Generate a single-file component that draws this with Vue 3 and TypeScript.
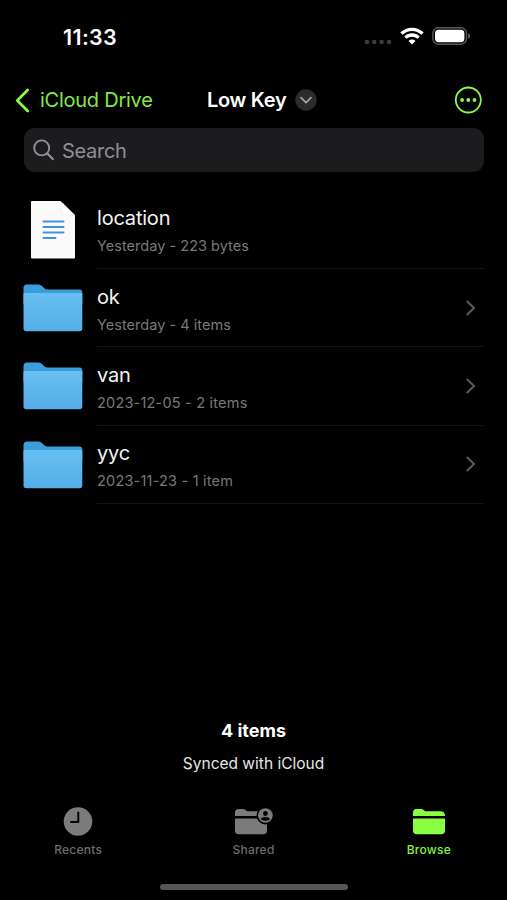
<script setup lang="ts">
interface Entry {
  name: string
  detail: string
  kind: 'file' | 'folder'
}

const entries: Entry[] = [
  { name: 'location', detail: 'Yesterday - 223 bytes', kind: 'file' },
  { name: 'ok', detail: 'Yesterday - 4 items', kind: 'folder' },
  { name: 'van', detail: '2023-12-05 - 2 items', kind: 'folder' },
  { name: 'yyc', detail: '2023-11-23 - 1 item', kind: 'folder' },
]

const isDated = (entry: Entry): boolean => /^\d/.test(entry.detail)
</script>

<template>
  <div class="screen">
    <header class="status">
      <span class="time">11:33</span>
      <div class="indicators">
        <svg class="dots" width="28" height="6" viewBox="0 0 28 6">
          <circle cx="3" cy="3" r="2.3" /><circle cx="10.3" cy="3" r="2.3" />
          <circle cx="17.6" cy="3" r="2.3" /><circle cx="24.9" cy="3" r="2.3" />
        </svg>
        <svg class="wifi" width="24" height="18" viewBox="0 0 24 18">
          <g fill="none" stroke="#fff" stroke-width="3.3">
            <path d="M1.5 6.6a15 15 0 0 1 21 0" />
            <path d="M5.4 10.7a9.4 9.4 0 0 1 13.2 0" />
          </g>
          <path d="M12 17.6 8.5 14a5 5 0 0 1 7 0z" fill="#fff" />
        </svg>
        <svg class="battery" width="39" height="18" viewBox="0 0 39 18">
          <rect x="0.9" y="0.8" width="33.6" height="16.4" rx="5.4" fill="none" stroke="#59595b" stroke-width="1.4" />
          <rect x="3" y="2.8" width="29.4" height="12.4" rx="3.6" fill="#fff" />
          <path d="M36.2 6.2c2.4 1 2.4 4.6 0 5.6z" fill="#69696b" />
        </svg>
      </div>
    </header>

    <nav class="navbar">
      <div class="back">
        <svg width="15" height="25" viewBox="0 0 15 25">
          <path d="M12.7 2 2.3 12.5 12.7 23" fill="none" stroke="#8bfa48" stroke-width="2.7" stroke-linecap="round" stroke-linejoin="round" />
        </svg>
        <span class="back-label">iCloud Drive</span>
      </div>
      <div class="title">
        <span class="title-label">Low Key</span>
        <svg width="22" height="22" viewBox="0 0 22 22">
          <circle cx="11" cy="11" r="10.7" fill="#2b2b2d" />
          <path d="m6 8.7 5 5 5-5" fill="none" stroke="#a2a2a6" stroke-width="1.8" stroke-linecap="round" stroke-linejoin="round" />
        </svg>
      </div>
      <svg class="more" width="28" height="28" viewBox="0 0 28 28" fill="#8bfa48">
        <circle cx="14.3" cy="14" r="12.5" fill="none" stroke="#8bfa48" stroke-width="1.8" />
        <circle cx="8.1" cy="14" r="1.9" /><circle cx="14.3" cy="14" r="1.9" /><circle cx="20.5" cy="14" r="1.9" />
      </svg>
    </nav>

    <div class="search">
      <svg width="22" height="22" viewBox="0 0 22 22" fill="none" stroke="#8f8f95" stroke-width="1.9" stroke-linecap="round">
        <circle cx="8.7" cy="8.9" r="7.5" /><path d="m14.3 14.500 5.500 5.500" stroke-width="2.300" />
      </svg>
      <span>Search</span>
    </div>

    <ul class="list">
      <li v-for="entry in entries" :key="entry.name" class="row">
        <div class="thumb">
          <svg v-if="entry.kind === 'file'" width="44" height="58" viewBox="0 0 44 58">
            <path d="M1 0h28.5L44 14.3V56.5q0 1-1 1H1q-1 0-1-1V1q0-1 1-1z" fill="#fafafa" />
            <path d="M30.500 1 44 14.300H33q-2.500 0-2.500-2.500z" fill="#ececee" />
            <path d="M31.200 1.700 42.800 13.500H33.200q-2 0-2-2z" fill="#fff" />
            <path d="M12.500 20.500h20M12.500 26h20M12.500 31.600h20M12.500 37h12" stroke="#3f8fe4" stroke-width="2" stroke-linecap="round" />
          </svg>
          <svg v-else width="60" height="48" viewBox="0 0 60 48">
            <defs>
              <linearGradient id="folder-front" x1="0" y1="0" x2="0" y2="1">
                <stop offset="0" stop-color="#67bff3" /><stop offset="1" stop-color="#55ade6" />
              </linearGradient>
            </defs>
            <path d="M.5 4Q.5.5 4 .5H15.500Q17.500.500 19 2L21.300 4.300Q22.500 5.500 24.500 5.500H56.500Q59.300 5.500 59.300 8.500V20H.5z" fill="#3c9ddd" />
            <path d="M.5 10Q.5 9 1.500 9H58.300Q59.300 9 59.300 10V44.500Q59.300 47.300 56.500 47.300H3.300Q.5 47.300.5 44.500z" fill="url(#folder-front)" />
          </svg>
        </div>
        <div class="body">
          <div class="texts">
            <span class="name">{{ entry.name }}</span>
            <span class="detail" :class="{ dated: isDated(entry) }">{{ entry.detail }}</span>
          </div>
          <svg v-if="entry.kind === 'folder'" class="chevron" width="10" height="16" viewBox="0 0 10 16">
            <path d="m1.300 1.500 6.700 6.500-6.700 6.500" fill="none" stroke="#58585b" stroke-width="2.100" stroke-linecap="round" stroke-linejoin="round" />
          </svg>
        </div>
      </li>
    </ul>

    <section class="summary">
      <strong>4 items</strong>
      <span>Synced with iCloud</span>
    </section>

    <footer class="tabs">
      <div class="tab">
        <svg width="30" height="30" viewBox="0 0 30 30">
          <circle cx="15" cy="14.500" r="14.300" fill="#7b7b7b" />
          <path d="M15.300 5.500v9.500H8" fill="none" stroke="#050505" stroke-width="2" stroke-linecap="round" stroke-linejoin="round" />
        </svg>
        <span>Recents</span>
      </div>
      <div class="tab">
        <svg width="39" height="30" viewBox="0 0 39 30">
          <path d="M1 9V5.500Q1 2 4.500 2H9Q10.500 2 11.700 3L12.500 3.700Q13.300 4.300 14.500 4.300H28.500Q33 4.300 33 9z" fill="#7b7b7b" />
          <path d="M1 11.500H33V23.500Q33 27.300 29.200 27.300H4.800Q1 27.300 1 23.500z" fill="#7b7b7b" />
          <circle cx="31.400" cy="8.500" r="8.900" fill="#000" />
          <circle cx="31.400" cy="8.500" r="7.300" fill="#7b7b7b" />
          <circle cx="31.400" cy="6.500" r="2.400" fill="#050505" />
          <path d="M26.800 12.400q0-2.500 4.600-2.500t4.600 2.500q-4.600 2.700-9.200 0z" fill="#050505" />
        </svg>
        <span>Shared</span>
      </div>
      <div class="tab active">
        <svg width="34" height="30" viewBox="0 0 34 30" fill="#8aff42">
          <path d="M1 9V5.500Q1 2 4.500 2H9Q10.500 2 11.700 3L12.500 3.700Q13.300 4.300 14.500 4.300H28.500Q33 4.300 33 9z" />
          <path d="M1 11.500H33V23.500Q33 27.300 29.200 27.300H4.800Q1 27.300 1 23.500z" />
        </svg>
        <span>Browse</span>
      </div>
    </footer>
    <div class="home"></div>
  </div>
</template>

<style>
body {
  background: #000;
}
</style>

<style scoped>
.screen {
  box-sizing: border-box;
  width: 507px;
  height: 900px;
  display: flex;
  flex-direction: column;
  overflow: hidden;
  background: #000;
  color: #fff;
  font-family: Inter, 'Liberation Sans', sans-serif;
}
svg {
  display: block;
  flex: none;
}
span,
strong {
  white-space: nowrap;
}
.status {
  height: 74px;
  flex: none;
  box-sizing: border-box;
  padding: 0 36px 0 63px;
  display: flex;
  align-items: center;
  justify-content: space-between;
}
.time {
  font-size: 21.5px;
  font-weight: 600;
  letter-spacing: 0.35px;
}
.indicators {
  display: flex;
  align-items: center;
  margin-top: -2px;
}
.dots {
  fill: #3b3b3c;
  margin: 12px 8px 0 0;
}
.wifi {
  margin-right: 8px;
}
.navbar {
  height: 52px;
  flex: none;
  box-sizing: border-box;
  padding: 0 25px 0 15px;
  display: grid;
  grid-template-columns: 192px auto 1fr;
  align-items: center;
}
.back {
  display: flex;
  align-items: center;
  gap: 10px;
  color: #84e94b;
  font-size: 20px;
  letter-spacing: -0.25px;
}
.title {
  display: flex;
  align-items: center;
  gap: 9px;
  font-size: 20px;
  font-weight: 600;
  letter-spacing: -0.3px;
}
.title svg {
  margin-bottom: 1px;
}
.more {
  justify-self: end;
}
.search {
  height: 44px;
  flex: none;
  box-sizing: border-box;
  margin: 2px 23px 0 24px;
  padding: 0 9px;
  display: flex;
  align-items: center;
  gap: 7px;
  border-radius: 11px;
  background: #1c1c1e;
  color: #8f8f95;
  font-size: 20px;
  letter-spacing: -0.3px;
}
.search span {
  padding-top: 1px;
}
.list {
  list-style: none;
  margin: 19px 0 0;
  padding: 0 23px;
}
.row {
  display: flex;
  height: 78.2px;
}
.thumb {
  width: 60px;
  height: 78px;
  display: flex;
  align-items: center;
  justify-content: center;
  margin-right: 14px;
}
.body {
  flex: 1;
  display: flex;
  align-items: center;
  justify-content: space-between;
  border-bottom: 1px solid #141415;
  padding-right: 8px;
}
.texts {
  display: flex;
  flex-direction: column;
  gap: 6px;
  padding-top: 1.6px;
}
.name {
  font-size: 20px;
  line-height: 26px;
  letter-spacing: -0.2px;
  color: #f4f4f4;
}
.detail {
  font-size: 14.5px;
  line-height: 18px;
  letter-spacing: 0.03px;
  color: #78787a;
}
.dated {
  letter-spacing: 0.2px;
}
.summary {
  margin-top: auto;
  display: flex;
  flex-direction: column;
  align-items: center;
  gap: 11px;
  margin-bottom: 33px;
}
.summary strong {
  font-size: 18px;
  line-height: 24px;
  font-weight: 700;
}
.summary span {
  font-size: 15.5px;
  line-height: 20px;
  color: #e6e6e6;
}
.tabs {
  display: grid;
  grid-template-columns: repeat(3, 175.3px);
  justify-content: center;
}
.tab {
  display: flex;
  flex-direction: column;
  align-items: center;
  gap: 5px;
  font-size: 12px;
  line-height: 16px;
  font-weight: 500;
  letter-spacing: 0.25px;
  color: #6c6c6c;
}
.tab.active {
  color: #86f443;
}
.home {
  width: 188px;
  height: 6px;
  flex: none;
  margin: 26px auto 10px;
  border-radius: 3px;
  background: #565656;
}
</style>
